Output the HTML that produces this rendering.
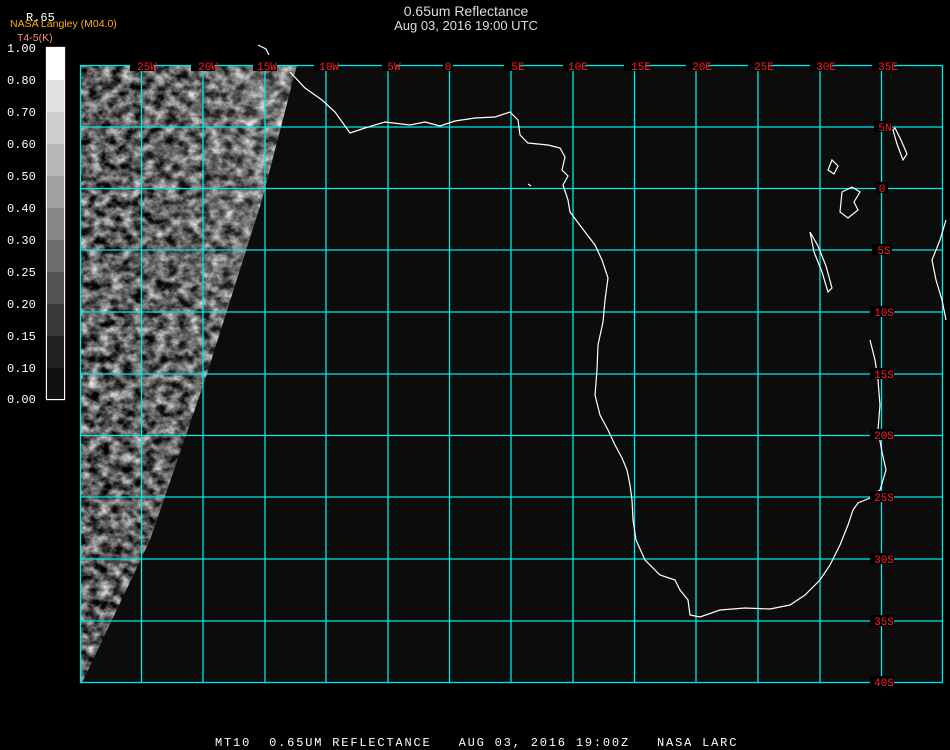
<!DOCTYPE html>
<html><head><meta charset="utf-8"><style>
body{margin:0;background:#000;width:950px;height:750px;overflow:hidden}
svg{display:block}
</style></head><body>
<svg width="950" height="750" xmlns="http://www.w3.org/2000/svg">
<defs>
<filter id="g" x="0" y="0" width="100%" height="100%" color-interpolation-filters="sRGB">
<feTurbulence type="fractalNoise" baseFrequency="0.09 0.11" numOctaves="4" seed="7" result="t"/>
<feColorMatrix in="t" type="matrix" values="1.5 0 0 0 -0.38  1.5 0 0 0 -0.38  1.5 0 0 0 -0.38  0 0 0 0 1"/>
</filter>
<linearGradient id="lg" x1="0" y1="0" x2="1" y2="0"><stop offset="0" stop-color="#000" stop-opacity="0"/><stop offset="0.8" stop-color="#fff" stop-opacity="0.15"/></linearGradient>
<clipPath id="c"><polygon points="80,65 297,65 262,200 205,380 150,540 82,683 80,683"/></clipPath>
</defs>
<rect x="80" y="65" width="863" height="618" fill="#0c0c0c"/>
<g clip-path="url(#c)"><rect x="80" y="65" width="220" height="620" filter="url(#g)"/><rect x="80" y="65" width="220" height="620" fill="url(#lg)"/></g>
<g stroke="#00e8e8" stroke-width="1.3" fill="none">
<rect x="80.5" y="65.5" width="862" height="617"/>
<path d="M141.5 65V683M203 65V683M265 65V683M326 65V683M388 65V683M449.5 65V683M511 65V683M573 65V683M634.5 65V683M696 65V683M758 65V683M820 65V683M881.5 65V683"/>
<path d="M80 127H943M80 188.5H943M80 250H943M80 312H943M80 374H943M80 435.5H943M80 497H943M80 559H943M80 621H943"/>
</g>
<g stroke="#fff" stroke-width="1.2" fill="none">
<path d="M258 45l8 4 3 6"/>
<path d="M290 72L305 88L322 100L335 112L350 133L365 128L385 122L410 125L425 122L440 126L455 121L475 118L495 117L510 112L518 120L520 135L528 143L548 145L560 148L565 157L562 170L568 176L563 185L568 200L570 212L582 228L595 245L602 260L608 278L605 300L603 322L598 345L597 370L595 395L600 415L608 430L615 445L622 458L627 470L630 485L632 500L633 520L636 540L645 560L660 575L675 580L680 590L688 600L690 615L700 617L720 610L745 608L770 609L790 605L805 595L820 580L830 565L840 545L848 525L853 510L858 503L870 498L880 490L886 470L882 452L878 430L880 405L878 380L875 360L870 340"/>
<path d="M832 160l-4 10 6 4 4-8zM842 192l10-5 8 5-6 10 4 8-10 8-8-6z M810 232l4 20 8 20 6 20 4-4-6-22-8-20z M895 128l6 12 6 14-4 6-6-16-4-14z M946 220l-6 20-8 20 4 20 6 20 4 20"/>
<path d="M528 184l3 2"/>
</g>
<g font-family="Liberation Mono, monospace" font-size="11" fill="#ff2020" text-anchor="middle">
<g fill="#000"><rect x="130" y="60" width="24" height="11"/><rect x="191" y="60" width="24" height="11"/><rect x="253" y="60" width="24" height="11"/><rect x="314" y="60" width="24" height="11"/><rect x="382" y="60" width="14" height="11"/><rect x="443" y="60" width="10" height="11"/><rect x="504" y="60" width="16" height="11"/><rect x="563" y="60" width="22" height="11"/><rect x="624" y="60" width="22" height="11"/><rect x="686" y="60" width="22" height="11"/><rect x="748" y="60" width="22" height="11"/><rect x="810" y="60" width="22" height="11"/><rect x="872" y="60" width="22" height="11"/>
<rect x="874" y="121" width="18" height="11"/><rect x="876" y="182" width="12" height="11"/><rect x="872" y="244" width="20" height="11"/><rect x="870" y="306" width="24" height="11"/><rect x="870" y="368" width="24" height="11"/><rect x="870" y="429" width="24" height="11"/><rect x="870" y="491" width="24" height="11"/><rect x="870" y="553" width="24" height="11"/><rect x="870" y="615" width="24" height="11"/><rect x="870" y="676" width="24" height="11"/></g>
<text x="147" y="70">25W</text><text x="208" y="70">20W</text><text x="267" y="70">15W</text><text x="329" y="70">10W</text><text x="394" y="70">5W</text><text x="448" y="70">0</text><text x="518" y="70">5E</text><text x="578" y="70">10E</text><text x="641" y="70">15E</text><text x="702" y="70">20E</text><text x="764" y="70">25E</text><text x="826" y="70">30E</text><text x="888" y="70">35E</text>
<text x="885" y="131">5N</text><text x="882" y="192">0</text><text x="884" y="254">5S</text><text x="884" y="316">10S</text><text x="884" y="378">15S</text><text x="884" y="439">20S</text><text x="884" y="501">25S</text><text x="884" y="563">30S</text><text x="884" y="625">35S</text><text x="884" y="686">40S</text>
</g>
<rect x="46.5" y="47.5" width="18" height="352" fill="#0c0c0c" stroke="#fff" stroke-width="1.3"/>
<rect x="47" y="48" width="17" height="32" fill="#fff"/>
<rect x="47" y="80" width="17" height="32" fill="#e2e2e2"/>
<rect x="47" y="112" width="17" height="32" fill="#cfcfcf"/>
<rect x="47" y="144" width="17" height="32" fill="#b6b6b6"/>
<rect x="47" y="176" width="17" height="32" fill="#a0a0a0"/>
<rect x="47" y="208" width="17" height="32" fill="#888"/>
<rect x="47" y="240" width="17" height="32" fill="#6e6e6e"/>
<rect x="47" y="272" width="17" height="32" fill="#545454"/>
<rect x="47" y="304" width="17" height="32" fill="#3a3a3a"/>
<rect x="47" y="336" width="17" height="32" fill="#222"/>
<rect x="47" y="368" width="17" height="31" fill="#111"/>
<g font-family="Liberation Mono, monospace" font-size="12" fill="#fff">
<text x="7" y="52">1.00</text><text x="7" y="84">0.80</text><text x="7" y="116">0.70</text><text x="7" y="148">0.60</text><text x="7" y="180">0.50</text><text x="7" y="212">0.40</text><text x="7" y="244">0.30</text><text x="7" y="276">0.25</text><text x="7" y="308">0.20</text><text x="7" y="340">0.15</text><text x="7" y="372">0.10</text><text x="7" y="403">0.00</text>
<text x="26" y="21">R.65</text>
<text x="215" y="746" font-size="12" letter-spacing="1.82" xml:space="preserve" style="white-space:pre">MT10  0.65UM REFLECTANCE   AUG 03, 2016 19:00Z   NASA LARC</text>
</g>
<text x="10" y="27" font-family="Liberation Sans, sans-serif" font-size="10.5" fill="#ffb000">NASA Langley (M04.0)</text>
<text x="17" y="41" font-family="Liberation Sans, sans-serif" font-size="10.5" fill="#ff9070">T4-5(K)</text>
<g font-family="Liberation Sans, sans-serif" font-size="14" fill="#ddd" text-anchor="middle">
<text x="466" y="16">0.65um Reflectance</text>
<text x="466" y="30" font-size="13">Aug 03, 2016 19:00 UTC</text>
</g>
</svg>
</body></html>
